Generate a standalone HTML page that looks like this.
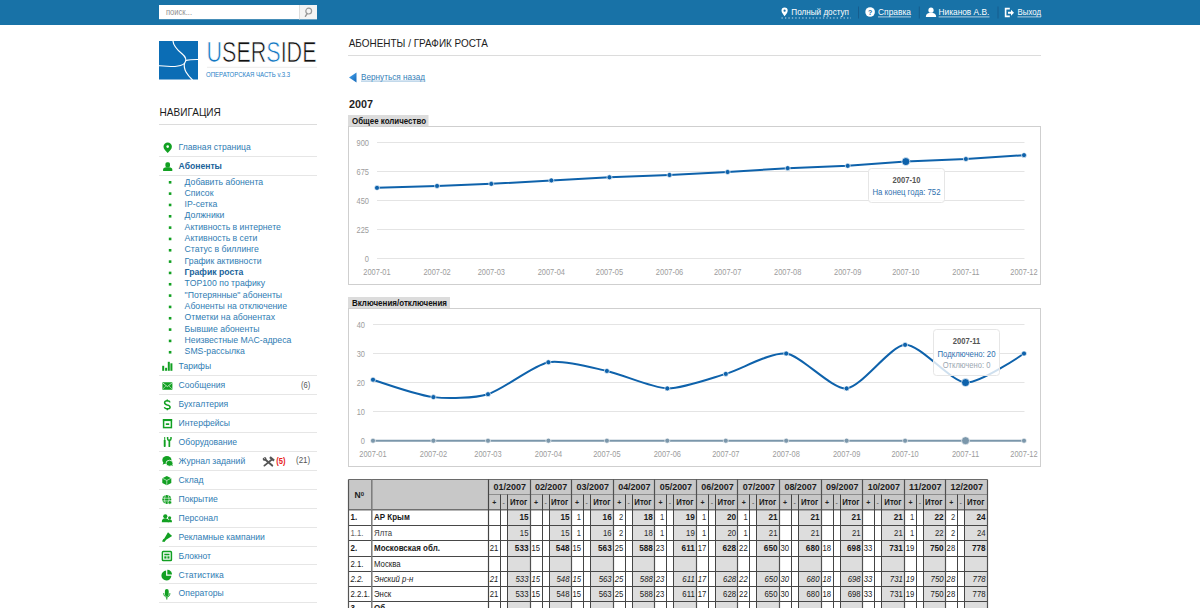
<!DOCTYPE html>
<html><head><meta charset="utf-8"><title>USERSIDE</title>
<style>
html,body{margin:0;padding:0;background:#fff;width:1200px;height:608px;overflow:hidden}
svg{display:block;font-family:"Liberation Sans",sans-serif}
</style></head><body>
<svg width="1200" height="608" viewBox="0 0 1200 608">
<rect x="0" y="0" width="1200" height="25" fill="#1872a7"/>
<rect x="159" y="5" width="158" height="14.2" fill="#fff"/>
<rect x="299.5" y="5" width="17.5" height="14.2" fill="#f4f4f4"/>
<line x1="299.5" y1="5" x2="299.5" y2="19.5" stroke="#dedede" stroke-width="1"/>
<circle cx="308.7" cy="11.1" r="2.9" fill="none" stroke="#9a9a9a" stroke-width="1.2"/>
<line x1="307.2" y1="13.5" x2="305.4" y2="16.3" stroke="#9a9a9a" stroke-width="1.4" stroke-linecap="round"/>
<text transform="translate(166.00,14.90) scale(1,1.1)" x="0" y="0" font-size="8.2" fill="#909090" textLength="26" lengthAdjust="spacingAndGlyphs">поиск...</text>
<path d="M784.6,7.6 a3.1,3.1 0 0 1 3.1,3.1 c0,2 -2,3.8 -3.1,5.6 c-1.1,-1.8 -3.1,-3.6 -3.1,-5.6 a3.1,3.1 0 0 1 3.1,-3.1z" fill="#fff"/>
<circle cx="784.6" cy="10.7" r="1.1" fill="#1a6ea5"/>
<text transform="translate(791.30,15.20) scale(1,1.16)" x="0" y="0" font-size="8.1" fill="#ffffff" textLength="57.7" lengthAdjust="spacingAndGlyphs">Полный доступ</text>
<line x1="781.5" y1="18" x2="851" y2="18" stroke="#c5d9ea" stroke-width="1.1" stroke-dasharray="1.3,2.15"/>
<line x1="858.5" y1="6.5" x2="858.5" y2="18.5" stroke="#155d8e" stroke-width="1"/>
<line x1="919.3" y1="6.5" x2="919.3" y2="18.5" stroke="#155d8e" stroke-width="1"/>
<line x1="998" y1="6.5" x2="998" y2="18.5" stroke="#155d8e" stroke-width="1"/>
<circle cx="870.1" cy="12" r="4.8" fill="#fff"/>
<text x="870.10" y="14.60" font-size="7" fill="#1a6ea5" font-weight="bold" text-anchor="middle">?</text>
<text transform="translate(878.00,15.20) scale(1,1.16)" x="0" y="0" font-size="8.1" fill="#ffffff" textLength="33" lengthAdjust="spacingAndGlyphs">Справка</text>
<line x1="878" y1="16.9" x2="911" y2="16.9" stroke="#d5e4f0" stroke-width="0.8"/>
<circle cx="931" cy="10.2" r="2.6" fill="#fff"/>
<path d="M925.8,17 c0,-3 2,-4.2 5.2,-4.2 c3.2,0 5.2,1.2 5.2,4.2 z" fill="#fff"/>
<text transform="translate(938.60,15.20) scale(1,1.16)" x="0" y="0" font-size="8.1" fill="#ffffff" textLength="50.7" lengthAdjust="spacingAndGlyphs">Никанов А.В.</text>
<line x1="938.6" y1="16.9" x2="989.5" y2="16.9" stroke="#d5e4f0" stroke-width="0.8"/>
<path d="M1004.8,7.8 h5 v1.6 h-3.4 v6.2 h3.4 v1.6 h-5 z" fill="#fff"/>
<path d="M1008,11.7 h3 v-2 l3,3 l-3,3 v-2 h-3 z" fill="#fff"/>
<text transform="translate(1017.50,15.20) scale(1,1.16)" x="0" y="0" font-size="8.1" fill="#ffffff" textLength="23.5" lengthAdjust="spacingAndGlyphs">Выход</text>
<line x1="1017.5" y1="16.9" x2="1041" y2="16.9" stroke="#d5e4f0" stroke-width="0.8"/>
<rect x="159" y="41" width="39" height="38.5" fill="#0b6db5"/>
<path d="M172.9,40.5 C173.3,46.5 178,50.5 182,53.8 C186,57 186.6,60.5 184.6,63.2 C183.6,65 184.6,69.5 186,72 C188,75.5 190.5,78 192.6,80" fill="none" stroke="#fff" stroke-width="1.2"/>
<path d="M185.8,60.4 C189,59.7 193,59.4 198.5,59.5" fill="none" stroke="#fff" stroke-width="1.1"/>
<path d="M158.5,65.8 C165,65.6 170,66.8 175,66.5 C179,66.2 182.5,65 184.5,63.4" fill="none" stroke="#fff" stroke-width="1.1"/>
<text x="206.5" y="61.6" font-size="30.2" textLength="110" lengthAdjust="spacingAndGlyphs" fill="#111" stroke="#fff" stroke-width="0.7"><tspan fill="#1477c2">U</tspan>SER<tspan fill="#1477c2">S</tspan>IDE</text>
<line x1="207" y1="67.3" x2="317" y2="67.3" stroke="#ebebeb" stroke-width="1"/>
<text x="206.00" y="76.80" font-size="6.3" fill="#1f82c6" textLength="84" lengthAdjust="spacingAndGlyphs">ОПЕРАТОРСКАЯ ЧАСТЬ v.3.3</text>
<text transform="translate(348.70,46.70) scale(1,1.05)" x="0" y="0" font-size="9.9" fill="#1c1c1c" textLength="139.3" lengthAdjust="spacingAndGlyphs">АБОНЕНТЫ / ГРАФИК РОСТА</text>
<line x1="348" y1="55.5" x2="1041" y2="55.5" stroke="#dcdcdc" stroke-width="1"/>
<defs><linearGradient id="tg" x1="0" y1="0" x2="1" y2="1"><stop offset="0" stop-color="#47a6f0"/><stop offset="1" stop-color="#1568b8"/></linearGradient></defs><path d="M349,77.5 L356.5,72.6 L356.5,82.5 Z" fill="url(#tg)"/>
<text transform="translate(361.00,80.40) scale(1,1.16)" x="0" y="0" font-size="8.2" fill="#3580b8" textLength="64" lengthAdjust="spacingAndGlyphs">Вернуться назад</text>
<line x1="361" y1="81.1" x2="425" y2="81.1" stroke="#7fb0d6" stroke-width="0.8"/>
<text x="349.00" y="108.00" font-size="10.8" fill="#1e1e1e" font-weight="bold" textLength="24" lengthAdjust="spacingAndGlyphs">2007</text>
<rect x="348" y="115" width="80.5" height="11" fill="#dcdcdc"/>
<text transform="translate(352.00,123.50) scale(1,1.15)" x="0" y="0" font-size="8" fill="#111" font-weight="bold" textLength="74" lengthAdjust="spacingAndGlyphs">Общее количество</text>
<rect x="348.5" y="126.5" width="692" height="158" fill="#fff" stroke="#cfcfcf" stroke-width="1"/>
<line x1="377" x2="1024.5" y1="142.5" y2="142.5" stroke="#e4e4e4" stroke-width="1"/>
<text x="369.00" y="145.70" font-size="8.3" fill="#9c9c9c" text-anchor="end" textLength="12.45" lengthAdjust="spacingAndGlyphs">900</text>
<line x1="377" x2="1024.5" y1="171.5" y2="171.5" stroke="#e4e4e4" stroke-width="1"/>
<text x="369.00" y="174.70" font-size="8.3" fill="#9c9c9c" text-anchor="end" textLength="12.45" lengthAdjust="spacingAndGlyphs">675</text>
<line x1="377" x2="1024.5" y1="200.5" y2="200.5" stroke="#e4e4e4" stroke-width="1"/>
<text x="369.00" y="203.70" font-size="8.3" fill="#9c9c9c" text-anchor="end" textLength="12.45" lengthAdjust="spacingAndGlyphs">450</text>
<line x1="377" x2="1024.5" y1="229.5" y2="229.5" stroke="#e4e4e4" stroke-width="1"/>
<text x="369.00" y="232.70" font-size="8.3" fill="#9c9c9c" text-anchor="end" textLength="12.45" lengthAdjust="spacingAndGlyphs">225</text>
<line x1="377" x2="1024.5" y1="258.5" y2="258.5" stroke="#e4e4e4" stroke-width="1"/>
<text x="369.00" y="261.70" font-size="8.3" fill="#9c9c9c" text-anchor="end" textLength="4.15" lengthAdjust="spacingAndGlyphs">0</text>
<text x="377.00" y="274.70" font-size="8.3" fill="#9c9c9c" text-anchor="middle" textLength="27.3" lengthAdjust="spacingAndGlyphs">2007-01</text>
<text x="437.05" y="274.70" font-size="8.3" fill="#9c9c9c" text-anchor="middle" textLength="27.3" lengthAdjust="spacingAndGlyphs">2007-02</text>
<text x="491.29" y="274.70" font-size="8.3" fill="#9c9c9c" text-anchor="middle" textLength="27.3" lengthAdjust="spacingAndGlyphs">2007-03</text>
<text x="551.34" y="274.70" font-size="8.3" fill="#9c9c9c" text-anchor="middle" textLength="27.3" lengthAdjust="spacingAndGlyphs">2007-04</text>
<text x="609.46" y="274.70" font-size="8.3" fill="#9c9c9c" text-anchor="middle" textLength="27.3" lengthAdjust="spacingAndGlyphs">2007-05</text>
<text x="669.51" y="274.70" font-size="8.3" fill="#9c9c9c" text-anchor="middle" textLength="27.3" lengthAdjust="spacingAndGlyphs">2007-06</text>
<text x="727.62" y="274.70" font-size="8.3" fill="#9c9c9c" text-anchor="middle" textLength="27.3" lengthAdjust="spacingAndGlyphs">2007-07</text>
<text x="787.67" y="274.70" font-size="8.3" fill="#9c9c9c" text-anchor="middle" textLength="27.3" lengthAdjust="spacingAndGlyphs">2007-08</text>
<text x="847.72" y="274.70" font-size="8.3" fill="#9c9c9c" text-anchor="middle" textLength="27.3" lengthAdjust="spacingAndGlyphs">2007-09</text>
<text x="905.84" y="274.70" font-size="8.3" fill="#9c9c9c" text-anchor="middle" textLength="27.3" lengthAdjust="spacingAndGlyphs">2007-10</text>
<text x="965.89" y="274.70" font-size="8.3" fill="#9c9c9c" text-anchor="middle" textLength="27.3" lengthAdjust="spacingAndGlyphs">2007-11</text>
<text x="1024.00" y="274.70" font-size="8.3" fill="#9c9c9c" text-anchor="middle" textLength="27.3" lengthAdjust="spacingAndGlyphs">2007-12</text>
<path d="M377.00,187.87 L437.05,185.94 L491.29,183.87 L551.34,180.39 L609.46,177.30 L669.51,174.98 L727.62,172.02 L787.67,168.15 L847.72,165.83 L905.84,161.58 L965.89,159.00 L1024.00,155.13" fill="none" stroke="#0e62ab" stroke-width="2"/>
<circle cx="377.00" cy="187.87" r="2.5" fill="#0e62ab" stroke="#fff" stroke-width="0.8" stroke-opacity="0.8"/>
<circle cx="437.05" cy="185.94" r="2.5" fill="#0e62ab" stroke="#fff" stroke-width="0.8" stroke-opacity="0.8"/>
<circle cx="491.29" cy="183.87" r="2.5" fill="#0e62ab" stroke="#fff" stroke-width="0.8" stroke-opacity="0.8"/>
<circle cx="551.34" cy="180.39" r="2.5" fill="#0e62ab" stroke="#fff" stroke-width="0.8" stroke-opacity="0.8"/>
<circle cx="609.46" cy="177.30" r="2.5" fill="#0e62ab" stroke="#fff" stroke-width="0.8" stroke-opacity="0.8"/>
<circle cx="669.51" cy="174.98" r="2.5" fill="#0e62ab" stroke="#fff" stroke-width="0.8" stroke-opacity="0.8"/>
<circle cx="727.62" cy="172.02" r="2.5" fill="#0e62ab" stroke="#fff" stroke-width="0.8" stroke-opacity="0.8"/>
<circle cx="787.67" cy="168.15" r="2.5" fill="#0e62ab" stroke="#fff" stroke-width="0.8" stroke-opacity="0.8"/>
<circle cx="847.72" cy="165.83" r="2.5" fill="#0e62ab" stroke="#fff" stroke-width="0.8" stroke-opacity="0.8"/>
<circle cx="905.84" cy="161.58" r="4" fill="#0e62ab" stroke="#fff" stroke-width="0.8" stroke-opacity="0.8"/>
<circle cx="965.89" cy="159.00" r="2.5" fill="#0e62ab" stroke="#fff" stroke-width="0.8" stroke-opacity="0.8"/>
<circle cx="1024.00" cy="155.13" r="2.5" fill="#0e62ab" stroke="#fff" stroke-width="0.8" stroke-opacity="0.8"/>
<rect x="868.5" y="168.5" width="76" height="34" rx="3" fill="#fff" fill-opacity="0.85" stroke="#e6e6e6"/>
<text transform="translate(906.50,182.50) scale(1,1.12)" x="0" y="0" font-size="7.6" fill="#555" font-weight="bold" text-anchor="middle">2007-10</text>
<text transform="translate(906.50,195.20) scale(1,1.12)" x="0" y="0" font-size="7.6" fill="#2f6fae" text-anchor="middle" textLength="68" lengthAdjust="spacingAndGlyphs">На конец года: 752</text>
<rect x="348" y="297" width="102" height="11" fill="#dcdcdc"/>
<text transform="translate(352.00,305.50) scale(1,1.15)" x="0" y="0" font-size="8" fill="#111" font-weight="bold" textLength="95" lengthAdjust="spacingAndGlyphs">Включения/отключения</text>
<rect x="348.5" y="308.5" width="692" height="158" fill="#fff" stroke="#cfcfcf" stroke-width="1"/>
<line x1="373" x2="1024.5" y1="324.5" y2="324.5" stroke="#e4e4e4" stroke-width="1"/>
<text x="365.00" y="327.70" font-size="8.3" fill="#9c9c9c" text-anchor="end" textLength="8.3" lengthAdjust="spacingAndGlyphs">40</text>
<line x1="373" x2="1024.5" y1="353.5" y2="353.5" stroke="#e4e4e4" stroke-width="1"/>
<text x="365.00" y="356.75" font-size="8.3" fill="#9c9c9c" text-anchor="end" textLength="8.3" lengthAdjust="spacingAndGlyphs">30</text>
<line x1="373" x2="1024.5" y1="382.5" y2="382.5" stroke="#e4e4e4" stroke-width="1"/>
<text x="365.00" y="385.80" font-size="8.3" fill="#9c9c9c" text-anchor="end" textLength="8.3" lengthAdjust="spacingAndGlyphs">20</text>
<line x1="373" x2="1024.5" y1="411.5" y2="411.5" stroke="#e4e4e4" stroke-width="1"/>
<text x="365.00" y="414.85" font-size="8.3" fill="#9c9c9c" text-anchor="end" textLength="8.3" lengthAdjust="spacingAndGlyphs">10</text>
<line x1="373" x2="1024.5" y1="440.5" y2="440.5" stroke="#e4e4e4" stroke-width="1"/>
<text x="365.00" y="443.90" font-size="8.3" fill="#9c9c9c" text-anchor="end" textLength="4.15" lengthAdjust="spacingAndGlyphs">0</text>
<text x="373.00" y="457.00" font-size="8.3" fill="#9c9c9c" text-anchor="middle" textLength="27.3" lengthAdjust="spacingAndGlyphs">2007-01</text>
<text x="433.42" y="457.00" font-size="8.3" fill="#9c9c9c" text-anchor="middle" textLength="27.3" lengthAdjust="spacingAndGlyphs">2007-02</text>
<text x="488.00" y="457.00" font-size="8.3" fill="#9c9c9c" text-anchor="middle" textLength="27.3" lengthAdjust="spacingAndGlyphs">2007-03</text>
<text x="548.42" y="457.00" font-size="8.3" fill="#9c9c9c" text-anchor="middle" textLength="27.3" lengthAdjust="spacingAndGlyphs">2007-04</text>
<text x="606.89" y="457.00" font-size="8.3" fill="#9c9c9c" text-anchor="middle" textLength="27.3" lengthAdjust="spacingAndGlyphs">2007-05</text>
<text x="667.31" y="457.00" font-size="8.3" fill="#9c9c9c" text-anchor="middle" textLength="27.3" lengthAdjust="spacingAndGlyphs">2007-06</text>
<text x="725.79" y="457.00" font-size="8.3" fill="#9c9c9c" text-anchor="middle" textLength="27.3" lengthAdjust="spacingAndGlyphs">2007-07</text>
<text x="786.21" y="457.00" font-size="8.3" fill="#9c9c9c" text-anchor="middle" textLength="27.3" lengthAdjust="spacingAndGlyphs">2007-08</text>
<text x="846.63" y="457.00" font-size="8.3" fill="#9c9c9c" text-anchor="middle" textLength="27.3" lengthAdjust="spacingAndGlyphs">2007-09</text>
<text x="905.10" y="457.00" font-size="8.3" fill="#9c9c9c" text-anchor="middle" textLength="27.3" lengthAdjust="spacingAndGlyphs">2007-10</text>
<text x="965.53" y="457.00" font-size="8.3" fill="#9c9c9c" text-anchor="middle" textLength="27.3" lengthAdjust="spacingAndGlyphs">2007-11</text>
<text x="1024.00" y="457.00" font-size="8.3" fill="#9c9c9c" text-anchor="middle" textLength="27.3" lengthAdjust="spacingAndGlyphs">2007-12</text>
<path d="M373.00,440.70 L433.42,440.70 L488.00,440.70 L548.42,440.70 L606.89,440.70 L667.31,440.70 L725.79,440.70 L786.21,440.70 L846.63,440.70 L905.10,440.70 L965.53,440.70 L1024.00,440.70" fill="none" stroke="#7b97ab" stroke-width="2"/>
<circle cx="373.00" cy="440.70" r="2.5" fill="#7b97ab" stroke="#fff" stroke-width="0.8" stroke-opacity="0.8"/>
<circle cx="433.42" cy="440.70" r="2.5" fill="#7b97ab" stroke="#fff" stroke-width="0.8" stroke-opacity="0.8"/>
<circle cx="488.00" cy="440.70" r="2.5" fill="#7b97ab" stroke="#fff" stroke-width="0.8" stroke-opacity="0.8"/>
<circle cx="548.42" cy="440.70" r="2.5" fill="#7b97ab" stroke="#fff" stroke-width="0.8" stroke-opacity="0.8"/>
<circle cx="606.89" cy="440.70" r="2.5" fill="#7b97ab" stroke="#fff" stroke-width="0.8" stroke-opacity="0.8"/>
<circle cx="667.31" cy="440.70" r="2.5" fill="#7b97ab" stroke="#fff" stroke-width="0.8" stroke-opacity="0.8"/>
<circle cx="725.79" cy="440.70" r="2.5" fill="#7b97ab" stroke="#fff" stroke-width="0.8" stroke-opacity="0.8"/>
<circle cx="786.21" cy="440.70" r="2.5" fill="#7b97ab" stroke="#fff" stroke-width="0.8" stroke-opacity="0.8"/>
<circle cx="846.63" cy="440.70" r="2.5" fill="#7b97ab" stroke="#fff" stroke-width="0.8" stroke-opacity="0.8"/>
<circle cx="905.10" cy="440.70" r="2.5" fill="#7b97ab" stroke="#fff" stroke-width="0.8" stroke-opacity="0.8"/>
<circle cx="965.53" cy="440.70" r="4" fill="#7b97ab" stroke="#fff" stroke-width="0.8" stroke-opacity="0.8"/>
<circle cx="1024.00" cy="440.70" r="2.5" fill="#7b97ab" stroke="#fff" stroke-width="0.8" stroke-opacity="0.8"/>
<path d="M373.00,379.69 C373.00,379.69 418.32,395.22 433.42,397.12 C447.07,398.85 474.35,398.36 488.00,394.22 C503.10,389.64 533.31,365.22 548.42,362.26 C563.04,359.41 592.27,367.77 606.89,370.98 C622.00,374.30 652.21,388.04 667.31,388.41 C681.93,388.77 711.17,378.17 725.79,373.88 C740.89,369.46 771.10,351.73 786.21,353.55 C801.32,355.37 831.53,389.52 846.63,388.41 C861.25,387.34 890.49,345.55 905.10,344.84 C920.21,344.10 950.42,381.49 965.53,382.60 C980.15,383.67 1024.00,353.55 1024.00,353.55" fill="none" stroke="#0e62ab" stroke-width="2"/>
<circle cx="373.00" cy="379.69" r="2.5" fill="#0e62ab" stroke="#fff" stroke-width="0.8" stroke-opacity="0.8"/>
<circle cx="433.42" cy="397.12" r="2.5" fill="#0e62ab" stroke="#fff" stroke-width="0.8" stroke-opacity="0.8"/>
<circle cx="488.00" cy="394.22" r="2.5" fill="#0e62ab" stroke="#fff" stroke-width="0.8" stroke-opacity="0.8"/>
<circle cx="548.42" cy="362.26" r="2.5" fill="#0e62ab" stroke="#fff" stroke-width="0.8" stroke-opacity="0.8"/>
<circle cx="606.89" cy="370.98" r="2.5" fill="#0e62ab" stroke="#fff" stroke-width="0.8" stroke-opacity="0.8"/>
<circle cx="667.31" cy="388.41" r="2.5" fill="#0e62ab" stroke="#fff" stroke-width="0.8" stroke-opacity="0.8"/>
<circle cx="725.79" cy="373.88" r="2.5" fill="#0e62ab" stroke="#fff" stroke-width="0.8" stroke-opacity="0.8"/>
<circle cx="786.21" cy="353.55" r="2.5" fill="#0e62ab" stroke="#fff" stroke-width="0.8" stroke-opacity="0.8"/>
<circle cx="846.63" cy="388.41" r="2.5" fill="#0e62ab" stroke="#fff" stroke-width="0.8" stroke-opacity="0.8"/>
<circle cx="905.10" cy="344.84" r="2.5" fill="#0e62ab" stroke="#fff" stroke-width="0.8" stroke-opacity="0.8"/>
<circle cx="965.53" cy="382.60" r="4" fill="#0e62ab" stroke="#fff" stroke-width="0.8" stroke-opacity="0.8"/>
<circle cx="1024.00" cy="353.55" r="2.5" fill="#0e62ab" stroke="#fff" stroke-width="0.8" stroke-opacity="0.8"/>
<rect x="933.5" y="329.5" width="66" height="46" rx="3" fill="#fff" fill-opacity="0.8" stroke="#e6e6e6"/>
<text transform="translate(966.50,344.00) scale(1,1.12)" x="0" y="0" font-size="7.6" fill="#555" font-weight="bold" text-anchor="middle">2007-11</text>
<text transform="translate(966.50,357.00) scale(1,1.12)" x="0" y="0" font-size="7.6" fill="#2f6fae" text-anchor="middle" textLength="58" lengthAdjust="spacingAndGlyphs">Подключено: 20</text>
<text transform="translate(966.50,368.30) scale(1,1.12)" x="0" y="0" font-size="7.6" fill="#9aa6b0" text-anchor="middle">Отключено: 0</text>
<text transform="translate(159.60,115.80) scale(1,1.1)" x="0" y="0" font-size="10" fill="#1a1a1a" textLength="61.2" lengthAdjust="spacingAndGlyphs">НАВИГАЦИЯ</text>
<line x1="159" y1="124.5" x2="317" y2="124.5" stroke="#dcdcdc" stroke-width="1"/>
<path d="M167.7,142.5 a4.2,4.2 0 0 1 4.2,4.2 c0,2.4 -2.4,4.3 -4.2,6.3 c-1.8,-2 -4.2,-3.9 -4.2,-6.3 a4.2,4.2 0 0 1 4.2,-4.2z" fill="#12a022"/><circle cx="167.7" cy="146.6" r="1.3" fill="#fff"/>
<text transform="translate(178.60,150.00) scale(1,1.1)" x="0" y="0" font-size="8.6" fill="#2f7cb3">Главная страница</text>
<rect x="165.39999999999998" y="162.2" width="4.6" height="5.2" rx="1.7" fill="#12a022"/><path d="M163.1,171.1 v-1.6 c0,-1.4 1.4,-2 3,-2.2 h3.2 c1.6,0.2 3,0.8 3,2.2 v1.6 z" fill="#12a022"/>
<text transform="translate(178.60,168.80) scale(1,1.1)" x="0" y="0" font-size="8.6" fill="#20639a" font-weight="bold">Абоненты</text>
<line x1="159" y1="156.5" x2="317" y2="156.5" stroke="#e6e6e6" stroke-width="1"/>
<line x1="159" y1="175.5" x2="317" y2="175.5" stroke="#e6e6e6" stroke-width="1"/>
<rect x="168.8" y="181.00" width="2.6" height="2.6" fill="#12a022"/>
<text transform="translate(184.60,184.50) scale(1,1.1)" x="0" y="0" font-size="8.7" fill="#2f7cb3">Добавить абонента</text>
<rect x="168.8" y="192.33" width="2.6" height="2.6" fill="#12a022"/>
<text transform="translate(184.60,195.83) scale(1,1.1)" x="0" y="0" font-size="8.7" fill="#2f7cb3">Список</text>
<rect x="168.8" y="203.66" width="2.6" height="2.6" fill="#12a022"/>
<text transform="translate(184.60,207.16) scale(1,1.1)" x="0" y="0" font-size="8.7" fill="#2f7cb3">IP-сетка</text>
<rect x="168.8" y="214.99" width="2.6" height="2.6" fill="#12a022"/>
<text transform="translate(184.60,218.49) scale(1,1.1)" x="0" y="0" font-size="8.7" fill="#2f7cb3">Должники</text>
<rect x="168.8" y="226.32" width="2.6" height="2.6" fill="#12a022"/>
<text transform="translate(184.60,229.82) scale(1,1.1)" x="0" y="0" font-size="8.7" fill="#2f7cb3">Активность в интернете</text>
<rect x="168.8" y="237.65" width="2.6" height="2.6" fill="#12a022"/>
<text transform="translate(184.60,241.15) scale(1,1.1)" x="0" y="0" font-size="8.7" fill="#2f7cb3">Активность в сети</text>
<rect x="168.8" y="248.98" width="2.6" height="2.6" fill="#12a022"/>
<text transform="translate(184.60,252.48) scale(1,1.1)" x="0" y="0" font-size="8.7" fill="#2f7cb3">Статус в биллинге</text>
<rect x="168.8" y="260.31" width="2.6" height="2.6" fill="#12a022"/>
<text transform="translate(184.60,263.81) scale(1,1.1)" x="0" y="0" font-size="8.7" fill="#2f7cb3">График активности</text>
<rect x="168.8" y="271.64" width="2.6" height="2.6" fill="#12a022"/>
<text transform="translate(184.60,275.14) scale(1,1.1)" x="0" y="0" font-size="8.7" fill="#20639a" font-weight="bold">График роста</text>
<rect x="168.8" y="282.97" width="2.6" height="2.6" fill="#12a022"/>
<text transform="translate(184.60,286.47) scale(1,1.1)" x="0" y="0" font-size="8.7" fill="#2f7cb3">TOP100 по трафику</text>
<rect x="168.8" y="294.30" width="2.6" height="2.6" fill="#12a022"/>
<text transform="translate(184.60,297.80) scale(1,1.1)" x="0" y="0" font-size="8.7" fill="#2f7cb3">"Потерянные" абоненты</text>
<rect x="168.8" y="305.63" width="2.6" height="2.6" fill="#12a022"/>
<text transform="translate(184.60,309.13) scale(1,1.1)" x="0" y="0" font-size="8.7" fill="#2f7cb3">Абоненты на отключение</text>
<rect x="168.8" y="316.96" width="2.6" height="2.6" fill="#12a022"/>
<text transform="translate(184.60,320.46) scale(1,1.1)" x="0" y="0" font-size="8.7" fill="#2f7cb3">Отметки на абонентах</text>
<rect x="168.8" y="328.29" width="2.6" height="2.6" fill="#12a022"/>
<text transform="translate(184.60,331.79) scale(1,1.1)" x="0" y="0" font-size="8.7" fill="#2f7cb3">Бывшие абоненты</text>
<rect x="168.8" y="339.62" width="2.6" height="2.6" fill="#12a022"/>
<text transform="translate(184.60,343.12) scale(1,1.1)" x="0" y="0" font-size="8.7" fill="#2f7cb3">Неизвестные MAC-адреса</text>
<rect x="168.8" y="350.95" width="2.6" height="2.6" fill="#12a022"/>
<text transform="translate(184.60,354.45) scale(1,1.1)" x="0" y="0" font-size="8.7" fill="#2f7cb3">SMS-рассылка</text>
<rect x="162.20" y="365.80" width="2" height="5" fill="#12a022"/>
<rect x="165.10" y="367.80" width="2" height="3" fill="#12a022"/>
<rect x="167.80" y="361.80" width="2" height="9" fill="#12a022"/>
<rect x="170.40" y="363.30" width="2" height="7.5" fill="#12a022"/>
<text transform="translate(178.60,369.30) scale(1,1.1)" x="0" y="0" font-size="8.6" fill="#2f7cb3">Тарифы</text>
<line x1="159" y1="375.5" x2="317" y2="375.5" stroke="#e6e6e6" stroke-width="1"/>
<rect x="162.4" y="382.22999999999996" width="10" height="7.4" rx="0.5" fill="#12a022"/><path d="M162.9,383.03 L167.4,386.63 L171.9,383.03" fill="none" stroke="#fff" stroke-width="0.7"/><path d="M162.9,388.83 L165.8,386.13 M171.9,388.83 L169.0,386.13" stroke="#fff" stroke-width="0.5"/>
<text transform="translate(178.60,388.23) scale(1,1.1)" x="0" y="0" font-size="8.6" fill="#2f7cb3">Сообщения</text>
<line x1="159" y1="394.5" x2="317" y2="394.5" stroke="#e6e6e6" stroke-width="1"/>
<path d="M170.0,402.36 C169.70000000000002,401.26 168.70000000000002,400.86 167.3,400.86 C165.60000000000002,400.86 164.60000000000002,401.65999999999997 164.60000000000002,402.86 C164.60000000000002,404.26 165.9,404.65999999999997 167.3,405.06 C168.9,405.46 170.10000000000002,405.96 170.10000000000002,407.15999999999997 C170.10000000000002,408.26 169.0,408.86 167.3,408.86 C165.70000000000002,408.86 164.70000000000002,408.26 164.4,407.06" fill="none" stroke="#12a022" stroke-width="1.5"/><path d="M167.3,399.46 V401.15999999999997 M167.3,408.56 V410.15999999999997" stroke="#12a022" stroke-width="1.4"/>
<text transform="translate(178.60,407.16) scale(1,1.1)" x="0" y="0" font-size="8.6" fill="#2f7cb3">Бухгалтерия</text>
<line x1="159" y1="413.5" x2="317" y2="413.5" stroke="#e6e6e6" stroke-width="1"/>
<rect x="163.6" y="419.79" width="7.8" height="7.8" fill="none" stroke="#12a022" stroke-width="1.5"/><rect x="162.9" y="419.09" width="9.2" height="2" fill="#12a022"/><rect x="165.8" y="423.29" width="3.4" height="1.7" fill="#12a022"/>
<text transform="translate(178.60,426.09) scale(1,1.1)" x="0" y="0" font-size="8.6" fill="#2f7cb3">Интерфейсы</text>
<line x1="159" y1="432.5" x2="317" y2="432.5" stroke="#e6e6e6" stroke-width="1"/>
<rect x="164.20000000000002" y="437.02" width="1" height="2.8" fill="#12a022"/><rect x="163.75" y="439.72" width="1.9" height="7.3" rx="0.7" fill="#12a022"/><path d="M167.60000000000002,437.02 V438.72 Q167.60000000000002,440.32 169.3,440.32 Q171.0,440.32 171.0,438.72 V437.02" fill="none" stroke="#12a022" stroke-width="1.5"/><rect x="168.5" y="439.82" width="1.7" height="7.2" rx="0.5" fill="#12a022"/>
<text transform="translate(178.60,445.02) scale(1,1.1)" x="0" y="0" font-size="8.6" fill="#2f7cb3">Оборудование</text>
<line x1="159" y1="451.5" x2="317" y2="451.5" stroke="#e6e6e6" stroke-width="1"/>
<ellipse cx="166.9" cy="460.04999999999995" rx="4.6" ry="4" fill="#12a022"/><path d="M163.5,462.15 L162.60000000000002,464.74999999999994 L165.60000000000002,463.15 Z" fill="#12a022"/><ellipse cx="169.5" cy="463.24999999999994" rx="3.5" ry="3" fill="#12a022" stroke="#fff" stroke-width="0.8"/><path d="M171.4,465.15 L172.60000000000002,466.34999999999997 L172.4,464.15 Z" fill="#12a022"/>
<text transform="translate(178.60,463.95) scale(1,1.1)" x="0" y="0" font-size="8.6" fill="#2f7cb3">Журнал заданий</text>
<line x1="159" y1="470.5" x2="317" y2="470.5" stroke="#e6e6e6" stroke-width="1"/>
<path d="M166.8,475.97999999999996 L171.3,478.17999999999995 L171.3,483.08 L166.8,485.28 L162.3,483.08 L162.3,478.17999999999995 Z" fill="#12a022"/><path d="M162.3,478.17999999999995 L166.8,480.47999999999996 L171.3,478.17999999999995 M166.8,480.47999999999996 V485.28" fill="none" stroke="#fff" stroke-width="0.6"/>
<text transform="translate(178.60,482.88) scale(1,1.1)" x="0" y="0" font-size="8.6" fill="#2f7cb3">Склад</text>
<line x1="159" y1="489.5" x2="317" y2="489.5" stroke="#e6e6e6" stroke-width="1"/>
<circle cx="166.8" cy="499.40999999999997" r="4.5" fill="#12a022"/><path d="M162.5,498.21 H171.10000000000002 M162.5,500.90999999999997 H171.10000000000002 M165.5,495.10999999999996 C164.3,498.40999999999997 164.3,500.40999999999997 165.5,503.71 M168.10000000000002,495.10999999999996 C169.3,498.40999999999997 169.3,500.40999999999997 168.10000000000002,503.71" fill="none" stroke="#fff" stroke-width="0.6"/><circle cx="169.8" cy="502.40999999999997" r="1.8" fill="#12a022" stroke="#fff" stroke-width="0.6"/>
<text transform="translate(178.60,501.81) scale(1,1.1)" x="0" y="0" font-size="8.6" fill="#2f7cb3">Покрытие</text>
<line x1="159" y1="508.5" x2="317" y2="508.5" stroke="#e6e6e6" stroke-width="1"/>
<circle cx="165.3" cy="516.3399999999999" r="2.1" fill="#12a022"/><path d="M161.8,522.3399999999999 c0,-3 1.2,-4 3.5,-4 c2.3,0 3.5,1 3.5,4z" fill="#12a022"/><circle cx="169.60000000000002" cy="517.8399999999999" r="1.6" fill="#12a022"/><path d="M167.8,522.3399999999999 c0,-2.3 0.8,-3 1.8,-3 c1.6,0 2.4,0.8 2.4,3z" fill="#12a022"/>
<text transform="translate(178.60,520.74) scale(1,1.1)" x="0" y="0" font-size="8.6" fill="#2f7cb3">Персонал</text>
<line x1="159" y1="527.5" x2="317" y2="527.5" stroke="#e6e6e6" stroke-width="1"/>
<path d="M168.0,532.27 L172.10000000000002,536.0699999999999 L166.20000000000002,539.87 L164.4,542.0699999999999 L162.0,541.47 L163.20000000000002,539.27 L164.3,538.5699999999999 Z" fill="#12a022"/>
<text transform="translate(178.60,539.67) scale(1,1.1)" x="0" y="0" font-size="8.6" fill="#2f7cb3">Рекламные кампании</text>
<line x1="159" y1="546.5" x2="317" y2="546.5" stroke="#e6e6e6" stroke-width="1"/>
<rect x="162.4" y="551.6" width="9" height="9" rx="0.8" fill="none" stroke="#12a022" stroke-width="1.5"/><rect x="164.3" y="553.7" width="5.2" height="1.6" fill="#12a022"/><rect x="164.3" y="556.3000000000001" width="2.2" height="2.3" fill="#12a022"/><rect x="167.4" y="556.3000000000001" width="2.1" height="2.3" fill="#12a022"/>
<text transform="translate(178.60,558.60) scale(1,1.1)" x="0" y="0" font-size="8.6" fill="#2f7cb3">Блокнот</text>
<line x1="159" y1="564.5" x2="317" y2="564.5" stroke="#e6e6e6" stroke-width="1"/>
<path d="M166.10000000000002,570.53 A5,5 0 1 0 171.4,575.73 L166.10000000000002,575.73 Z" fill="#12a022"/><path d="M167.3,569.83 A4.6,4.6 0 0 1 172.0,574.53 L167.3,574.53 Z" fill="#12a022"/>
<text transform="translate(178.60,577.53) scale(1,1.1)" x="0" y="0" font-size="8.6" fill="#2f7cb3">Статистика</text>
<line x1="159" y1="583.5" x2="317" y2="583.5" stroke="#e6e6e6" stroke-width="1"/>
<rect x="164.9" y="589.06" width="3.8" height="7.4" rx="1.9" fill="#12a022"/><path d="M163.70000000000002,593.06 c0,2.8 1.3,3.9 3.1,3.9 c1.8,0 3.1,-1.1 3.1,-3.9" fill="none" stroke="#12a022" stroke-width="0.9"/><path d="M166.8,596.8599999999999 v2.6" stroke="#12a022" stroke-width="1.1"/>
<text transform="translate(178.60,596.46) scale(1,1.1)" x="0" y="0" font-size="8.6" fill="#2f7cb3">Операторы</text>
<line x1="159" y1="602.5" x2="317" y2="602.5" stroke="#e6e6e6" stroke-width="1"/>
<rect x="164.9" y="607.99" width="3.8" height="7.4" rx="1.9" fill="#12a022"/><path d="M163.70000000000002,611.99 c0,2.8 1.3,3.9 3.1,3.9 c1.8,0 3.1,-1.1 3.1,-3.9" fill="none" stroke="#12a022" stroke-width="0.9"/><path d="M166.8,615.79 v2.6" stroke="#12a022" stroke-width="1.1"/>
<line x1="159" y1="621.5" x2="317" y2="621.5" stroke="#e6e6e6" stroke-width="1"/>
<text transform="translate(310.20,387.60) scale(1,1.1)" x="0" y="0" font-size="7.6" fill="#555" text-anchor="end">(6)</text>
<text transform="translate(310.20,463.30) scale(1,1.1)" x="0" y="0" font-size="8" fill="#555" text-anchor="end">(21)</text>
<text transform="translate(285.60,463.50) scale(1,1.1)" x="0" y="0" font-size="8.6" fill="#e8201b" font-weight="bold" text-anchor="end" textLength="9.3" lengthAdjust="spacingAndGlyphs">(5)</text>
<g fill="#555" stroke="#555"><path d="M265.2,459.6 L272.2,465.6" stroke-width="2" stroke-linecap="round"/><path d="M271.6,459.8 L264.4,465.6" stroke-width="1.8" stroke-linecap="round"/><rect x="269.3" y="457.7" width="5.4" height="2.3" stroke="none" transform="rotate(40 272 458.85)"/><circle cx="264.6" cy="458.9" r="1.9" stroke="none"/><path d="M263.4,457 L264.5,458.6" stroke="#fff" stroke-width="1"/></g>
<rect x="348.6" y="479.5" width="638.8" height="30.30000000000001" fill="#c8c8c8"/>
<rect x="507.3" y="509.8" width="22.999999999999943" height="110.19999999999999" fill="#dddddd"/>
<rect x="549.1" y="509.8" width="22.199999999999932" height="110.19999999999999" fill="#dddddd"/>
<rect x="590.1" y="509.8" width="23.399999999999977" height="110.19999999999999" fill="#dddddd"/>
<rect x="632.3000000000001" y="509.8" width="22.299999999999955" height="110.19999999999999" fill="#dddddd"/>
<rect x="673.4000000000001" y="509.8" width="23.199999999999932" height="110.19999999999999" fill="#dddddd"/>
<rect x="715.4000000000001" y="509.8" width="22.499999999999886" height="110.19999999999999" fill="#dddddd"/>
<rect x="756.7" y="509.8" width="22.59999999999991" height="110.19999999999999" fill="#dddddd"/>
<rect x="798.1" y="509.8" width="23.199999999999932" height="110.19999999999999" fill="#dddddd"/>
<rect x="840.1" y="509.8" width="22.399999999999977" height="110.19999999999999" fill="#dddddd"/>
<rect x="881.3000000000001" y="509.8" width="23.299999999999955" height="110.19999999999999" fill="#dddddd"/>
<rect x="923.4000000000001" y="509.8" width="21.999999999999886" height="110.19999999999999" fill="#dddddd"/>
<rect x="964.2" y="509.8" width="23.199999999999932" height="110.19999999999999" fill="#dddddd"/>
<line x1="348.6" y1="479.5" x2="987.4" y2="479.5" stroke="#6a6a6a" stroke-width="1.2"/>
<line x1="488.5" y1="494.5" x2="987.4" y2="494.5" stroke="#8d8d8d" stroke-width="1"/>
<line x1="348.6" y1="509.8" x2="987.4" y2="509.8" stroke="#707070" stroke-width="1.5"/>
<line x1="348.6" y1="525.5" x2="987.4" y2="525.5" stroke="#474747" stroke-width="1"/>
<line x1="348.6" y1="540.5" x2="987.4" y2="540.5" stroke="#474747" stroke-width="1"/>
<line x1="348.6" y1="556.5" x2="987.4" y2="556.5" stroke="#474747" stroke-width="1"/>
<line x1="348.6" y1="571.5" x2="987.4" y2="571.5" stroke="#474747" stroke-width="1"/>
<line x1="348.6" y1="586.5" x2="987.4" y2="586.5" stroke="#474747" stroke-width="1"/>
<line x1="348.6" y1="601.5" x2="987.4" y2="601.5" stroke="#474747" stroke-width="1"/>
<line x1="348.6" y1="617.5" x2="987.4" y2="617.5" stroke="#474747" stroke-width="1"/>
<line x1="348.5" y1="479.5" x2="348.5" y2="620" stroke="#555" stroke-width="1.2"/>
<line x1="371.8" y1="479.5" x2="371.8" y2="620" stroke="#7a7a7a" stroke-width="1.5"/>
<line x1="488.5" y1="479.5" x2="488.5" y2="620" stroke="#454545" stroke-width="1.2"/>
<line x1="530.5" y1="479.5" x2="530.5" y2="620" stroke="#505050" stroke-width="1.2"/>
<line x1="500.5" y1="494.4" x2="500.5" y2="620" stroke="#454545" stroke-width="1"/>
<line x1="507.5" y1="494.4" x2="507.5" y2="620" stroke="#454545" stroke-width="1"/>
<line x1="571.5" y1="479.5" x2="571.5" y2="620" stroke="#505050" stroke-width="1.2"/>
<line x1="542.5" y1="494.4" x2="542.5" y2="620" stroke="#454545" stroke-width="1"/>
<line x1="549.5" y1="494.4" x2="549.5" y2="620" stroke="#454545" stroke-width="1"/>
<line x1="613.5" y1="479.5" x2="613.5" y2="620" stroke="#505050" stroke-width="1.2"/>
<line x1="583.5" y1="494.4" x2="583.5" y2="620" stroke="#454545" stroke-width="1"/>
<line x1="590.5" y1="494.4" x2="590.5" y2="620" stroke="#454545" stroke-width="1"/>
<line x1="654.5" y1="479.5" x2="654.5" y2="620" stroke="#505050" stroke-width="1.2"/>
<line x1="625.5" y1="494.4" x2="625.5" y2="620" stroke="#454545" stroke-width="1"/>
<line x1="632.5" y1="494.4" x2="632.5" y2="620" stroke="#454545" stroke-width="1"/>
<line x1="696.5" y1="479.5" x2="696.5" y2="620" stroke="#505050" stroke-width="1.2"/>
<line x1="666.5" y1="494.4" x2="666.5" y2="620" stroke="#454545" stroke-width="1"/>
<line x1="673.5" y1="494.4" x2="673.5" y2="620" stroke="#454545" stroke-width="1"/>
<line x1="737.5" y1="479.5" x2="737.5" y2="620" stroke="#505050" stroke-width="1.2"/>
<line x1="708.5" y1="494.4" x2="708.5" y2="620" stroke="#454545" stroke-width="1"/>
<line x1="715.5" y1="494.4" x2="715.5" y2="620" stroke="#454545" stroke-width="1"/>
<line x1="779.5" y1="479.5" x2="779.5" y2="620" stroke="#505050" stroke-width="1.2"/>
<line x1="749.5" y1="494.4" x2="749.5" y2="620" stroke="#454545" stroke-width="1"/>
<line x1="756.5" y1="494.4" x2="756.5" y2="620" stroke="#454545" stroke-width="1"/>
<line x1="821.5" y1="479.5" x2="821.5" y2="620" stroke="#505050" stroke-width="1.2"/>
<line x1="791.5" y1="494.4" x2="791.5" y2="620" stroke="#454545" stroke-width="1"/>
<line x1="798.5" y1="494.4" x2="798.5" y2="620" stroke="#454545" stroke-width="1"/>
<line x1="862.5" y1="479.5" x2="862.5" y2="620" stroke="#505050" stroke-width="1.2"/>
<line x1="833.5" y1="494.4" x2="833.5" y2="620" stroke="#454545" stroke-width="1"/>
<line x1="840.5" y1="494.4" x2="840.5" y2="620" stroke="#454545" stroke-width="1"/>
<line x1="904.5" y1="479.5" x2="904.5" y2="620" stroke="#505050" stroke-width="1.2"/>
<line x1="874.5" y1="494.4" x2="874.5" y2="620" stroke="#454545" stroke-width="1"/>
<line x1="881.5" y1="494.4" x2="881.5" y2="620" stroke="#454545" stroke-width="1"/>
<line x1="945.5" y1="479.5" x2="945.5" y2="620" stroke="#505050" stroke-width="1.2"/>
<line x1="916.5" y1="494.4" x2="916.5" y2="620" stroke="#454545" stroke-width="1"/>
<line x1="923.5" y1="494.4" x2="923.5" y2="620" stroke="#454545" stroke-width="1"/>
<line x1="987.5" y1="479.5" x2="987.5" y2="620" stroke="#505050" stroke-width="1.2"/>
<line x1="957.5" y1="494.4" x2="957.5" y2="620" stroke="#454545" stroke-width="1"/>
<line x1="964.5" y1="494.4" x2="964.5" y2="620" stroke="#454545" stroke-width="1"/>
<text x="354.5" y="497.8" font-size="8.5" font-weight="bold" fill="#222">N<tspan font-size="6" dy="-2.3">0</tspan></text>
<text transform="translate(509.70,490.20) scale(1,1.08)" x="0" y="0" font-size="8.2" fill="#1c1c1c" font-weight="bold" text-anchor="middle" textLength="32.4" lengthAdjust="spacingAndGlyphs">01/2007</text>
<text transform="translate(494.35,505.30) scale(1,1.08)" x="0" y="0" font-size="7" fill="#222" font-weight="bold" text-anchor="middle">+</text>
<text transform="translate(503.75,505.30) scale(1,1.08)" x="0" y="0" font-size="7" fill="#444" text-anchor="middle">-</text>
<text transform="translate(527.30,505.30) scale(1,1.08)" x="0" y="0" font-size="7.8" fill="#1c1c1c" font-weight="bold" text-anchor="end" textLength="17.3" lengthAdjust="spacingAndGlyphs">Итог</text>
<text transform="translate(551.10,490.20) scale(1,1.08)" x="0" y="0" font-size="8.2" fill="#1c1c1c" font-weight="bold" text-anchor="middle" textLength="32.4" lengthAdjust="spacingAndGlyphs">02/2007</text>
<text transform="translate(536.15,505.30) scale(1,1.08)" x="0" y="0" font-size="7" fill="#222" font-weight="bold" text-anchor="middle">+</text>
<text transform="translate(545.55,505.30) scale(1,1.08)" x="0" y="0" font-size="7" fill="#444" text-anchor="middle">-</text>
<text transform="translate(568.30,505.30) scale(1,1.08)" x="0" y="0" font-size="7.8" fill="#1c1c1c" font-weight="bold" text-anchor="end" textLength="17.3" lengthAdjust="spacingAndGlyphs">Итог</text>
<text transform="translate(592.70,490.20) scale(1,1.08)" x="0" y="0" font-size="8.2" fill="#1c1c1c" font-weight="bold" text-anchor="middle" textLength="32.4" lengthAdjust="spacingAndGlyphs">03/2007</text>
<text transform="translate(577.15,505.30) scale(1,1.08)" x="0" y="0" font-size="7" fill="#222" font-weight="bold" text-anchor="middle">+</text>
<text transform="translate(586.55,505.30) scale(1,1.08)" x="0" y="0" font-size="7" fill="#444" text-anchor="middle">-</text>
<text transform="translate(610.50,505.30) scale(1,1.08)" x="0" y="0" font-size="7.8" fill="#1c1c1c" font-weight="bold" text-anchor="end" textLength="17.3" lengthAdjust="spacingAndGlyphs">Итог</text>
<text transform="translate(634.35,490.20) scale(1,1.08)" x="0" y="0" font-size="8.2" fill="#1c1c1c" font-weight="bold" text-anchor="middle" textLength="32.4" lengthAdjust="spacingAndGlyphs">04/2007</text>
<text transform="translate(619.35,505.30) scale(1,1.08)" x="0" y="0" font-size="7" fill="#222" font-weight="bold" text-anchor="middle">+</text>
<text transform="translate(628.75,505.30) scale(1,1.08)" x="0" y="0" font-size="7" fill="#444" text-anchor="middle">-</text>
<text transform="translate(651.60,505.30) scale(1,1.08)" x="0" y="0" font-size="7.8" fill="#1c1c1c" font-weight="bold" text-anchor="end" textLength="17.3" lengthAdjust="spacingAndGlyphs">Итог</text>
<text transform="translate(675.90,490.20) scale(1,1.08)" x="0" y="0" font-size="8.2" fill="#1c1c1c" font-weight="bold" text-anchor="middle" textLength="32.4" lengthAdjust="spacingAndGlyphs">05/2007</text>
<text transform="translate(660.45,505.30) scale(1,1.08)" x="0" y="0" font-size="7" fill="#222" font-weight="bold" text-anchor="middle">+</text>
<text transform="translate(669.85,505.30) scale(1,1.08)" x="0" y="0" font-size="7" fill="#444" text-anchor="middle">-</text>
<text transform="translate(693.60,505.30) scale(1,1.08)" x="0" y="0" font-size="7.8" fill="#1c1c1c" font-weight="bold" text-anchor="end" textLength="17.3" lengthAdjust="spacingAndGlyphs">Итог</text>
<text transform="translate(717.55,490.20) scale(1,1.08)" x="0" y="0" font-size="8.2" fill="#1c1c1c" font-weight="bold" text-anchor="middle" textLength="32.4" lengthAdjust="spacingAndGlyphs">06/2007</text>
<text transform="translate(702.45,505.30) scale(1,1.08)" x="0" y="0" font-size="7" fill="#222" font-weight="bold" text-anchor="middle">+</text>
<text transform="translate(711.85,505.30) scale(1,1.08)" x="0" y="0" font-size="7" fill="#444" text-anchor="middle">-</text>
<text transform="translate(734.90,505.30) scale(1,1.08)" x="0" y="0" font-size="7.8" fill="#1c1c1c" font-weight="bold" text-anchor="end" textLength="17.3" lengthAdjust="spacingAndGlyphs">Итог</text>
<text transform="translate(758.90,490.20) scale(1,1.08)" x="0" y="0" font-size="8.2" fill="#1c1c1c" font-weight="bold" text-anchor="middle" textLength="32.4" lengthAdjust="spacingAndGlyphs">07/2007</text>
<text transform="translate(743.75,505.30) scale(1,1.08)" x="0" y="0" font-size="7" fill="#222" font-weight="bold" text-anchor="middle">+</text>
<text transform="translate(753.15,505.30) scale(1,1.08)" x="0" y="0" font-size="7" fill="#444" text-anchor="middle">-</text>
<text transform="translate(776.30,505.30) scale(1,1.08)" x="0" y="0" font-size="7.8" fill="#1c1c1c" font-weight="bold" text-anchor="end" textLength="17.3" lengthAdjust="spacingAndGlyphs">Итог</text>
<text transform="translate(800.60,490.20) scale(1,1.08)" x="0" y="0" font-size="8.2" fill="#1c1c1c" font-weight="bold" text-anchor="middle" textLength="32.4" lengthAdjust="spacingAndGlyphs">08/2007</text>
<text transform="translate(785.15,505.30) scale(1,1.08)" x="0" y="0" font-size="7" fill="#222" font-weight="bold" text-anchor="middle">+</text>
<text transform="translate(794.55,505.30) scale(1,1.08)" x="0" y="0" font-size="7" fill="#444" text-anchor="middle">-</text>
<text transform="translate(818.30,505.30) scale(1,1.08)" x="0" y="0" font-size="7.8" fill="#1c1c1c" font-weight="bold" text-anchor="end" textLength="17.3" lengthAdjust="spacingAndGlyphs">Итог</text>
<text transform="translate(842.20,490.20) scale(1,1.08)" x="0" y="0" font-size="8.2" fill="#1c1c1c" font-weight="bold" text-anchor="middle" textLength="32.4" lengthAdjust="spacingAndGlyphs">09/2007</text>
<text transform="translate(827.15,505.30) scale(1,1.08)" x="0" y="0" font-size="7" fill="#222" font-weight="bold" text-anchor="middle">+</text>
<text transform="translate(836.55,505.30) scale(1,1.08)" x="0" y="0" font-size="7" fill="#444" text-anchor="middle">-</text>
<text transform="translate(859.50,505.30) scale(1,1.08)" x="0" y="0" font-size="7.8" fill="#1c1c1c" font-weight="bold" text-anchor="end" textLength="17.3" lengthAdjust="spacingAndGlyphs">Итог</text>
<text transform="translate(883.85,490.20) scale(1,1.08)" x="0" y="0" font-size="8.2" fill="#1c1c1c" font-weight="bold" text-anchor="middle" textLength="32.4" lengthAdjust="spacingAndGlyphs">10/2007</text>
<text transform="translate(868.35,505.30) scale(1,1.08)" x="0" y="0" font-size="7" fill="#222" font-weight="bold" text-anchor="middle">+</text>
<text transform="translate(877.75,505.30) scale(1,1.08)" x="0" y="0" font-size="7" fill="#444" text-anchor="middle">-</text>
<text transform="translate(901.60,505.30) scale(1,1.08)" x="0" y="0" font-size="7.8" fill="#1c1c1c" font-weight="bold" text-anchor="end" textLength="17.3" lengthAdjust="spacingAndGlyphs">Итог</text>
<text transform="translate(925.30,490.20) scale(1,1.08)" x="0" y="0" font-size="8.2" fill="#1c1c1c" font-weight="bold" text-anchor="middle" textLength="32.4" lengthAdjust="spacingAndGlyphs">11/2007</text>
<text transform="translate(910.45,505.30) scale(1,1.08)" x="0" y="0" font-size="7" fill="#222" font-weight="bold" text-anchor="middle">+</text>
<text transform="translate(919.85,505.30) scale(1,1.08)" x="0" y="0" font-size="7" fill="#444" text-anchor="middle">-</text>
<text transform="translate(942.40,505.30) scale(1,1.08)" x="0" y="0" font-size="7.8" fill="#1c1c1c" font-weight="bold" text-anchor="end" textLength="17.3" lengthAdjust="spacingAndGlyphs">Итог</text>
<text transform="translate(966.70,490.20) scale(1,1.08)" x="0" y="0" font-size="8.2" fill="#1c1c1c" font-weight="bold" text-anchor="middle" textLength="32.4" lengthAdjust="spacingAndGlyphs">12/2007</text>
<text transform="translate(951.25,505.30) scale(1,1.08)" x="0" y="0" font-size="7" fill="#222" font-weight="bold" text-anchor="middle">+</text>
<text transform="translate(960.65,505.30) scale(1,1.08)" x="0" y="0" font-size="7" fill="#444" text-anchor="middle">-</text>
<text transform="translate(984.40,505.30) scale(1,1.08)" x="0" y="0" font-size="7.8" fill="#1c1c1c" font-weight="bold" text-anchor="end" textLength="17.3" lengthAdjust="spacingAndGlyphs">Итог</text>
<text transform="translate(350.50,520.00) scale(1,1.08)" x="0" y="0" font-size="8" fill="#1a1a1a" font-weight="bold">1.</text>
<text transform="translate(374.00,520.00) scale(1,1.08)" x="0" y="0" font-size="8" fill="#1a1a1a" font-weight="bold">АР Крым</text>
<text transform="translate(528.50,520.00) scale(1,1.08)" x="0" y="0" font-size="8.2" fill="#1a1a1a" font-weight="bold" text-anchor="end">15</text>
<text transform="translate(569.50,520.00) scale(1,1.08)" x="0" y="0" font-size="8.2" fill="#1a1a1a" font-weight="bold" text-anchor="end">15</text>
<text transform="translate(581.00,520.00) scale(1,1.08)" x="0" y="0" font-size="7.6" fill="#333" text-anchor="end">1</text>
<text transform="translate(611.70,520.00) scale(1,1.08)" x="0" y="0" font-size="8.2" fill="#1a1a1a" font-weight="bold" text-anchor="end">16</text>
<text transform="translate(623.20,520.00) scale(1,1.08)" x="0" y="0" font-size="7.6" fill="#333" text-anchor="end">2</text>
<text transform="translate(652.80,520.00) scale(1,1.08)" x="0" y="0" font-size="8.2" fill="#1a1a1a" font-weight="bold" text-anchor="end">18</text>
<text transform="translate(664.30,520.00) scale(1,1.08)" x="0" y="0" font-size="7.6" fill="#333" text-anchor="end">1</text>
<text transform="translate(694.80,520.00) scale(1,1.08)" x="0" y="0" font-size="8.2" fill="#1a1a1a" font-weight="bold" text-anchor="end">19</text>
<text transform="translate(706.30,520.00) scale(1,1.08)" x="0" y="0" font-size="7.6" fill="#333" text-anchor="end">1</text>
<text transform="translate(736.10,520.00) scale(1,1.08)" x="0" y="0" font-size="8.2" fill="#1a1a1a" font-weight="bold" text-anchor="end">20</text>
<text transform="translate(747.60,520.00) scale(1,1.08)" x="0" y="0" font-size="7.6" fill="#333" text-anchor="end">1</text>
<text transform="translate(777.50,520.00) scale(1,1.08)" x="0" y="0" font-size="8.2" fill="#1a1a1a" font-weight="bold" text-anchor="end">21</text>
<text transform="translate(819.50,520.00) scale(1,1.08)" x="0" y="0" font-size="8.2" fill="#1a1a1a" font-weight="bold" text-anchor="end">21</text>
<text transform="translate(860.70,520.00) scale(1,1.08)" x="0" y="0" font-size="8.2" fill="#1a1a1a" font-weight="bold" text-anchor="end">21</text>
<text transform="translate(902.80,520.00) scale(1,1.08)" x="0" y="0" font-size="8.2" fill="#1a1a1a" font-weight="bold" text-anchor="end">21</text>
<text transform="translate(914.30,520.00) scale(1,1.08)" x="0" y="0" font-size="7.6" fill="#333" text-anchor="end">1</text>
<text transform="translate(943.60,520.00) scale(1,1.08)" x="0" y="0" font-size="8.2" fill="#1a1a1a" font-weight="bold" text-anchor="end">22</text>
<text transform="translate(955.10,520.00) scale(1,1.08)" x="0" y="0" font-size="7.6" fill="#333" text-anchor="end">2</text>
<text transform="translate(985.60,520.00) scale(1,1.08)" x="0" y="0" font-size="8.2" fill="#1a1a1a" font-weight="bold" text-anchor="end">24</text>
<text transform="translate(350.50,535.60) scale(1,1.08)" x="0" y="0" font-size="7.8" fill="#666">1.1.</text>
<text transform="translate(374.00,535.60) scale(1,1.08)" x="0" y="0" font-size="7.8" fill="#3a3a3a">Ялта</text>
<text transform="translate(528.50,535.60) scale(1,1.08)" x="0" y="0" font-size="7.8" fill="#2a2a2a" text-anchor="end">15</text>
<text transform="translate(569.50,535.60) scale(1,1.08)" x="0" y="0" font-size="7.8" fill="#2a2a2a" text-anchor="end">15</text>
<text transform="translate(581.00,535.60) scale(1,1.08)" x="0" y="0" font-size="7.6" fill="#333" text-anchor="end">1</text>
<text transform="translate(611.70,535.60) scale(1,1.08)" x="0" y="0" font-size="7.8" fill="#2a2a2a" text-anchor="end">16</text>
<text transform="translate(623.20,535.60) scale(1,1.08)" x="0" y="0" font-size="7.6" fill="#333" text-anchor="end">2</text>
<text transform="translate(652.80,535.60) scale(1,1.08)" x="0" y="0" font-size="7.8" fill="#2a2a2a" text-anchor="end">18</text>
<text transform="translate(664.30,535.60) scale(1,1.08)" x="0" y="0" font-size="7.6" fill="#333" text-anchor="end">1</text>
<text transform="translate(694.80,535.60) scale(1,1.08)" x="0" y="0" font-size="7.8" fill="#2a2a2a" text-anchor="end">19</text>
<text transform="translate(706.30,535.60) scale(1,1.08)" x="0" y="0" font-size="7.6" fill="#333" text-anchor="end">1</text>
<text transform="translate(736.10,535.60) scale(1,1.08)" x="0" y="0" font-size="7.8" fill="#2a2a2a" text-anchor="end">20</text>
<text transform="translate(747.60,535.60) scale(1,1.08)" x="0" y="0" font-size="7.6" fill="#333" text-anchor="end">1</text>
<text transform="translate(777.50,535.60) scale(1,1.08)" x="0" y="0" font-size="7.8" fill="#2a2a2a" text-anchor="end">21</text>
<text transform="translate(819.50,535.60) scale(1,1.08)" x="0" y="0" font-size="7.8" fill="#2a2a2a" text-anchor="end">21</text>
<text transform="translate(860.70,535.60) scale(1,1.08)" x="0" y="0" font-size="7.8" fill="#2a2a2a" text-anchor="end">21</text>
<text transform="translate(902.80,535.60) scale(1,1.08)" x="0" y="0" font-size="7.8" fill="#2a2a2a" text-anchor="end">21</text>
<text transform="translate(914.30,535.60) scale(1,1.08)" x="0" y="0" font-size="7.6" fill="#333" text-anchor="end">1</text>
<text transform="translate(943.60,535.60) scale(1,1.08)" x="0" y="0" font-size="7.8" fill="#2a2a2a" text-anchor="end">22</text>
<text transform="translate(955.10,535.60) scale(1,1.08)" x="0" y="0" font-size="7.6" fill="#333" text-anchor="end">2</text>
<text transform="translate(985.60,535.60) scale(1,1.08)" x="0" y="0" font-size="7.8" fill="#2a2a2a" text-anchor="end">24</text>
<text transform="translate(350.50,551.00) scale(1,1.08)" x="0" y="0" font-size="8" fill="#1a1a1a" font-weight="bold">2.</text>
<text transform="translate(374.00,551.00) scale(1,1.08)" x="0" y="0" font-size="8" fill="#1a1a1a" font-weight="bold">Московская обл.</text>
<text transform="translate(489.70,551.00) scale(1,1.08)" x="0" y="0" font-size="7.6" fill="#222" textLength="8.6" lengthAdjust="spacingAndGlyphs">21</text>
<text transform="translate(528.50,551.00) scale(1,1.08)" x="0" y="0" font-size="8.2" fill="#1a1a1a" font-weight="bold" text-anchor="end">533</text>
<text transform="translate(531.50,551.00) scale(1,1.08)" x="0" y="0" font-size="7.6" fill="#222" textLength="8.6" lengthAdjust="spacingAndGlyphs">15</text>
<text transform="translate(569.50,551.00) scale(1,1.08)" x="0" y="0" font-size="8.2" fill="#1a1a1a" font-weight="bold" text-anchor="end">548</text>
<text transform="translate(572.50,551.00) scale(1,1.08)" x="0" y="0" font-size="7.6" fill="#222" textLength="8.6" lengthAdjust="spacingAndGlyphs">15</text>
<text transform="translate(611.70,551.00) scale(1,1.08)" x="0" y="0" font-size="8.2" fill="#1a1a1a" font-weight="bold" text-anchor="end">563</text>
<text transform="translate(614.70,551.00) scale(1,1.08)" x="0" y="0" font-size="7.6" fill="#222" textLength="8.6" lengthAdjust="spacingAndGlyphs">25</text>
<text transform="translate(652.80,551.00) scale(1,1.08)" x="0" y="0" font-size="8.2" fill="#1a1a1a" font-weight="bold" text-anchor="end">588</text>
<text transform="translate(655.80,551.00) scale(1,1.08)" x="0" y="0" font-size="7.6" fill="#222" textLength="8.6" lengthAdjust="spacingAndGlyphs">23</text>
<text transform="translate(694.80,551.00) scale(1,1.08)" x="0" y="0" font-size="8.2" fill="#1a1a1a" font-weight="bold" text-anchor="end">611</text>
<text transform="translate(697.80,551.00) scale(1,1.08)" x="0" y="0" font-size="7.6" fill="#222" textLength="8.6" lengthAdjust="spacingAndGlyphs">17</text>
<text transform="translate(736.10,551.00) scale(1,1.08)" x="0" y="0" font-size="8.2" fill="#1a1a1a" font-weight="bold" text-anchor="end">628</text>
<text transform="translate(739.10,551.00) scale(1,1.08)" x="0" y="0" font-size="7.6" fill="#222" textLength="8.6" lengthAdjust="spacingAndGlyphs">22</text>
<text transform="translate(777.50,551.00) scale(1,1.08)" x="0" y="0" font-size="8.2" fill="#1a1a1a" font-weight="bold" text-anchor="end">650</text>
<text transform="translate(780.50,551.00) scale(1,1.08)" x="0" y="0" font-size="7.6" fill="#222" textLength="8.6" lengthAdjust="spacingAndGlyphs">30</text>
<text transform="translate(819.50,551.00) scale(1,1.08)" x="0" y="0" font-size="8.2" fill="#1a1a1a" font-weight="bold" text-anchor="end">680</text>
<text transform="translate(822.50,551.00) scale(1,1.08)" x="0" y="0" font-size="7.6" fill="#222" textLength="8.6" lengthAdjust="spacingAndGlyphs">18</text>
<text transform="translate(860.70,551.00) scale(1,1.08)" x="0" y="0" font-size="8.2" fill="#1a1a1a" font-weight="bold" text-anchor="end">698</text>
<text transform="translate(863.70,551.00) scale(1,1.08)" x="0" y="0" font-size="7.6" fill="#222" textLength="8.6" lengthAdjust="spacingAndGlyphs">33</text>
<text transform="translate(902.80,551.00) scale(1,1.08)" x="0" y="0" font-size="8.2" fill="#1a1a1a" font-weight="bold" text-anchor="end">731</text>
<text transform="translate(905.80,551.00) scale(1,1.08)" x="0" y="0" font-size="7.6" fill="#222" textLength="8.6" lengthAdjust="spacingAndGlyphs">19</text>
<text transform="translate(943.60,551.00) scale(1,1.08)" x="0" y="0" font-size="8.2" fill="#1a1a1a" font-weight="bold" text-anchor="end">750</text>
<text transform="translate(946.60,551.00) scale(1,1.08)" x="0" y="0" font-size="7.6" fill="#222" textLength="8.6" lengthAdjust="spacingAndGlyphs">28</text>
<text transform="translate(985.60,551.00) scale(1,1.08)" x="0" y="0" font-size="8.2" fill="#1a1a1a" font-weight="bold" text-anchor="end">778</text>
<text transform="translate(350.50,566.50) scale(1,1.08)" x="0" y="0" font-size="7.8" fill="#1a1a1a">2.1.</text>
<text transform="translate(374.00,566.50) scale(1,1.08)" x="0" y="0" font-size="7.8" fill="#1a1a1a">Москва</text>
<text transform="translate(350.50,581.80) scale(1,1.08)" x="0" y="0" font-size="7.8" fill="#1a1a1a" font-style="italic">2.2.</text>
<text transform="translate(374.00,581.80) scale(1,1.08)" x="0" y="0" font-size="7.8" fill="#1a1a1a" font-style="italic">Энский р-н</text>
<text transform="translate(489.70,581.80) scale(1,1.08)" x="0" y="0" font-size="7.6" fill="#222" textLength="8.6" lengthAdjust="spacingAndGlyphs" font-style="italic">21</text>
<text transform="translate(528.50,581.80) scale(1,1.08)" x="0" y="0" font-size="7.8" fill="#1a1a1a" text-anchor="end" font-style="italic">533</text>
<text transform="translate(531.50,581.80) scale(1,1.08)" x="0" y="0" font-size="7.6" fill="#222" textLength="8.6" lengthAdjust="spacingAndGlyphs" font-style="italic">15</text>
<text transform="translate(569.50,581.80) scale(1,1.08)" x="0" y="0" font-size="7.8" fill="#1a1a1a" text-anchor="end" font-style="italic">548</text>
<text transform="translate(572.50,581.80) scale(1,1.08)" x="0" y="0" font-size="7.6" fill="#222" textLength="8.6" lengthAdjust="spacingAndGlyphs" font-style="italic">15</text>
<text transform="translate(611.70,581.80) scale(1,1.08)" x="0" y="0" font-size="7.8" fill="#1a1a1a" text-anchor="end" font-style="italic">563</text>
<text transform="translate(614.70,581.80) scale(1,1.08)" x="0" y="0" font-size="7.6" fill="#222" textLength="8.6" lengthAdjust="spacingAndGlyphs" font-style="italic">25</text>
<text transform="translate(652.80,581.80) scale(1,1.08)" x="0" y="0" font-size="7.8" fill="#1a1a1a" text-anchor="end" font-style="italic">588</text>
<text transform="translate(655.80,581.80) scale(1,1.08)" x="0" y="0" font-size="7.6" fill="#222" textLength="8.6" lengthAdjust="spacingAndGlyphs" font-style="italic">23</text>
<text transform="translate(694.80,581.80) scale(1,1.08)" x="0" y="0" font-size="7.8" fill="#1a1a1a" text-anchor="end" font-style="italic">611</text>
<text transform="translate(697.80,581.80) scale(1,1.08)" x="0" y="0" font-size="7.6" fill="#222" textLength="8.6" lengthAdjust="spacingAndGlyphs" font-style="italic">17</text>
<text transform="translate(736.10,581.80) scale(1,1.08)" x="0" y="0" font-size="7.8" fill="#1a1a1a" text-anchor="end" font-style="italic">628</text>
<text transform="translate(739.10,581.80) scale(1,1.08)" x="0" y="0" font-size="7.6" fill="#222" textLength="8.6" lengthAdjust="spacingAndGlyphs" font-style="italic">22</text>
<text transform="translate(777.50,581.80) scale(1,1.08)" x="0" y="0" font-size="7.8" fill="#1a1a1a" text-anchor="end" font-style="italic">650</text>
<text transform="translate(780.50,581.80) scale(1,1.08)" x="0" y="0" font-size="7.6" fill="#222" textLength="8.6" lengthAdjust="spacingAndGlyphs" font-style="italic">30</text>
<text transform="translate(819.50,581.80) scale(1,1.08)" x="0" y="0" font-size="7.8" fill="#1a1a1a" text-anchor="end" font-style="italic">680</text>
<text transform="translate(822.50,581.80) scale(1,1.08)" x="0" y="0" font-size="7.6" fill="#222" textLength="8.6" lengthAdjust="spacingAndGlyphs" font-style="italic">18</text>
<text transform="translate(860.70,581.80) scale(1,1.08)" x="0" y="0" font-size="7.8" fill="#1a1a1a" text-anchor="end" font-style="italic">698</text>
<text transform="translate(863.70,581.80) scale(1,1.08)" x="0" y="0" font-size="7.6" fill="#222" textLength="8.6" lengthAdjust="spacingAndGlyphs" font-style="italic">33</text>
<text transform="translate(902.80,581.80) scale(1,1.08)" x="0" y="0" font-size="7.8" fill="#1a1a1a" text-anchor="end" font-style="italic">731</text>
<text transform="translate(905.80,581.80) scale(1,1.08)" x="0" y="0" font-size="7.6" fill="#222" textLength="8.6" lengthAdjust="spacingAndGlyphs" font-style="italic">19</text>
<text transform="translate(943.60,581.80) scale(1,1.08)" x="0" y="0" font-size="7.8" fill="#1a1a1a" text-anchor="end" font-style="italic">750</text>
<text transform="translate(946.60,581.80) scale(1,1.08)" x="0" y="0" font-size="7.6" fill="#222" textLength="8.6" lengthAdjust="spacingAndGlyphs" font-style="italic">28</text>
<text transform="translate(985.60,581.80) scale(1,1.08)" x="0" y="0" font-size="7.8" fill="#1a1a1a" text-anchor="end" font-style="italic">778</text>
<text transform="translate(350.50,596.90) scale(1,1.08)" x="0" y="0" font-size="7.8" fill="#1a1a1a">2.2.1.</text>
<text transform="translate(374.00,596.90) scale(1,1.08)" x="0" y="0" font-size="7.8" fill="#1a1a1a">Энск</text>
<text transform="translate(489.70,596.90) scale(1,1.08)" x="0" y="0" font-size="7.6" fill="#222" textLength="8.6" lengthAdjust="spacingAndGlyphs">21</text>
<text transform="translate(528.50,596.90) scale(1,1.08)" x="0" y="0" font-size="7.8" fill="#1a1a1a" text-anchor="end">533</text>
<text transform="translate(531.50,596.90) scale(1,1.08)" x="0" y="0" font-size="7.6" fill="#222" textLength="8.6" lengthAdjust="spacingAndGlyphs">15</text>
<text transform="translate(569.50,596.90) scale(1,1.08)" x="0" y="0" font-size="7.8" fill="#1a1a1a" text-anchor="end">548</text>
<text transform="translate(572.50,596.90) scale(1,1.08)" x="0" y="0" font-size="7.6" fill="#222" textLength="8.6" lengthAdjust="spacingAndGlyphs">15</text>
<text transform="translate(611.70,596.90) scale(1,1.08)" x="0" y="0" font-size="7.8" fill="#1a1a1a" text-anchor="end">563</text>
<text transform="translate(614.70,596.90) scale(1,1.08)" x="0" y="0" font-size="7.6" fill="#222" textLength="8.6" lengthAdjust="spacingAndGlyphs">25</text>
<text transform="translate(652.80,596.90) scale(1,1.08)" x="0" y="0" font-size="7.8" fill="#1a1a1a" text-anchor="end">588</text>
<text transform="translate(655.80,596.90) scale(1,1.08)" x="0" y="0" font-size="7.6" fill="#222" textLength="8.6" lengthAdjust="spacingAndGlyphs">23</text>
<text transform="translate(694.80,596.90) scale(1,1.08)" x="0" y="0" font-size="7.8" fill="#1a1a1a" text-anchor="end">611</text>
<text transform="translate(697.80,596.90) scale(1,1.08)" x="0" y="0" font-size="7.6" fill="#222" textLength="8.6" lengthAdjust="spacingAndGlyphs">17</text>
<text transform="translate(736.10,596.90) scale(1,1.08)" x="0" y="0" font-size="7.8" fill="#1a1a1a" text-anchor="end">628</text>
<text transform="translate(739.10,596.90) scale(1,1.08)" x="0" y="0" font-size="7.6" fill="#222" textLength="8.6" lengthAdjust="spacingAndGlyphs">22</text>
<text transform="translate(777.50,596.90) scale(1,1.08)" x="0" y="0" font-size="7.8" fill="#1a1a1a" text-anchor="end">650</text>
<text transform="translate(780.50,596.90) scale(1,1.08)" x="0" y="0" font-size="7.6" fill="#222" textLength="8.6" lengthAdjust="spacingAndGlyphs">30</text>
<text transform="translate(819.50,596.90) scale(1,1.08)" x="0" y="0" font-size="7.8" fill="#1a1a1a" text-anchor="end">680</text>
<text transform="translate(822.50,596.90) scale(1,1.08)" x="0" y="0" font-size="7.6" fill="#222" textLength="8.6" lengthAdjust="spacingAndGlyphs">18</text>
<text transform="translate(860.70,596.90) scale(1,1.08)" x="0" y="0" font-size="7.8" fill="#1a1a1a" text-anchor="end">698</text>
<text transform="translate(863.70,596.90) scale(1,1.08)" x="0" y="0" font-size="7.6" fill="#222" textLength="8.6" lengthAdjust="spacingAndGlyphs">33</text>
<text transform="translate(902.80,596.90) scale(1,1.08)" x="0" y="0" font-size="7.8" fill="#1a1a1a" text-anchor="end">731</text>
<text transform="translate(905.80,596.90) scale(1,1.08)" x="0" y="0" font-size="7.6" fill="#222" textLength="8.6" lengthAdjust="spacingAndGlyphs">19</text>
<text transform="translate(943.60,596.90) scale(1,1.08)" x="0" y="0" font-size="7.8" fill="#1a1a1a" text-anchor="end">750</text>
<text transform="translate(946.60,596.90) scale(1,1.08)" x="0" y="0" font-size="7.6" fill="#222" textLength="8.6" lengthAdjust="spacingAndGlyphs">28</text>
<text transform="translate(985.60,596.90) scale(1,1.08)" x="0" y="0" font-size="7.8" fill="#1a1a1a" text-anchor="end">778</text>
<text transform="translate(350.50,610.80) scale(1,1.08)" x="0" y="0" font-size="8" fill="#1a1a1a" font-weight="bold">3.</text>
<text transform="translate(374.00,610.80) scale(1,1.08)" x="0" y="0" font-size="8" fill="#1a1a1a" font-weight="bold">Об</text>
</svg>
</body></html>
